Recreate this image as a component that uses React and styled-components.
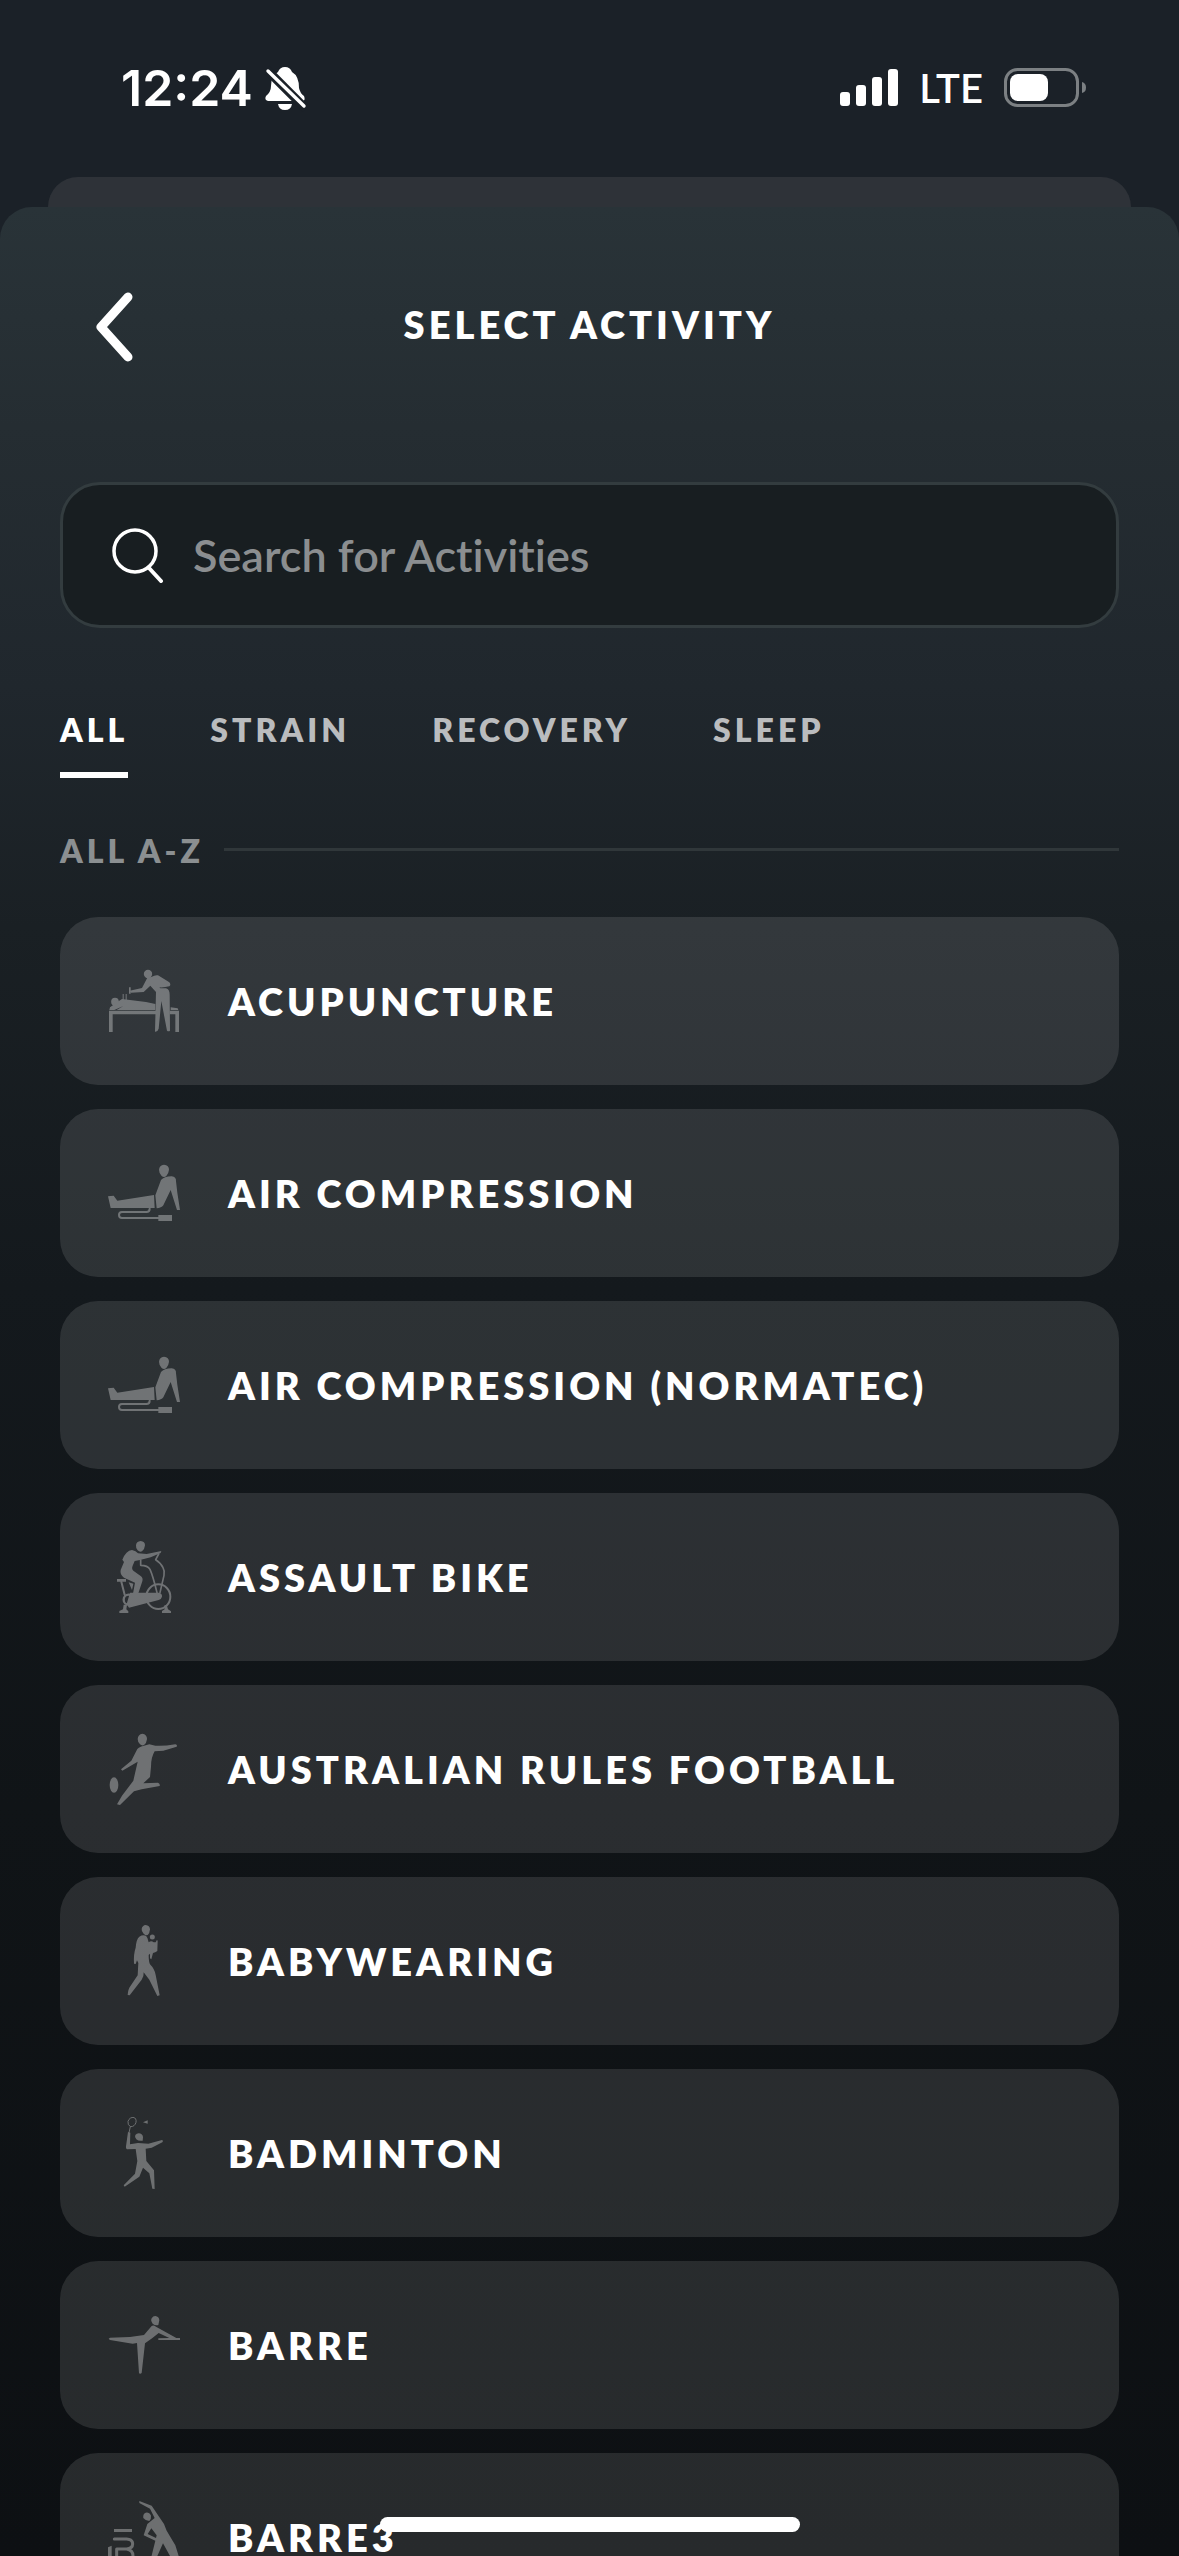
import React, { useState } from "react";
import styled, { createGlobalStyle } from "styled-components";

const GlobalStyle = createGlobalStyle`
  * { box-sizing: border-box; }
  body { margin: 0; background: #1b2128; }
  button, input { font: inherit; color: inherit; }
`;

const uiFont = `Lato, "Open Sans", sans-serif`;
const systemFont = `Inter, Roboto, sans-serif`;

const Screen = styled.div`
  position: relative;
  display: flex;
  flex-direction: column;
  height: 100vh;
  overflow: hidden;
  background: #1b2128;
  color: #fff;
  font-family: ${uiFont};
`;

const StatusBar = styled.header`
  display: flex;
  align-items: center;
  justify-content: space-between;
  flex: none;
  height: 177px;
  padding: 0 93px 2px 121px;
`;

const StatusGroup = styled.div`
  display: flex;
  align-items: center;
  gap: ${(p) => p.$gap}px;
`;

const Clock = styled.time`
  font-family: ${systemFont};
  font-size: 50px;
  font-weight: 600;
  line-height: 60px;
`;

const Network = styled.span`
  font-size: 40px;
  font-weight: 600;
  line-height: 44px;
`;

const BackSheet = styled.div`
  flex: none;
  height: 30px;
  margin: 0 48px;
  border-radius: 30px 30px 0 0;
  background: #2e3238;
`;

const Sheet = styled.main`
  display: flex;
  flex-direction: column;
  flex: 1;
  min-height: 0;
  border-radius: 32px 32px 0 0;
  background: linear-gradient(
    #293338 0,
    #252d32 220px,
    #20272d 480px,
    #1a2024 720px,
    #14191d 1080px,
    #101417 1600px,
    #0d1013 100%
  );
`;

const TitleBar = styled.div`
  display: grid;
  grid-template-columns: 120px 1fr 120px;
  align-items: center;
  flex: none;
  height: 238px;
  padding: 0 60px;
`;

const BackButton = styled.button`
  display: flex;
  width: 108px;
  padding: 20px 32px;
  border: 0;
  background: none;
`;

const Title = styled.h1`
  margin: 0;
  padding-bottom: 4px;
  font-size: 38px;
  font-weight: 800;
  line-height: 36px;
  letter-spacing: 4px;
  text-align: center;
`;

const SearchBox = styled.label`
  display: flex;
  align-items: center;
  gap: 28px;
  flex: none;
  height: 146px;
  margin: 37px 60px 0;
  padding: 0 48px;
  border: 3px solid #333c3f;
  border-radius: 40px;
  background: #181e21;
`;

const SearchInput = styled.input`
  flex: 1;
  min-width: 0;
  padding: 0;
  border: 0;
  outline: 0;
  background: none;
  font-size: 45px;
  font-weight: 600;
  font-variant-ligatures: none;
  line-height: 52px;
  &::placeholder { color: #8b8e90; opacity: 1; }
`;

const Tabs = styled.div`
  display: flex;
  gap: 82px;
  flex: none;
  margin: 84px 60px 0;
`;

const Tab = styled.button`
  padding: 0 0 24px;
  border: 0;
  border-bottom: 6px solid ${(p) => (p.$active ? "#fff" : "transparent")};
  background: none;
  color: ${(p) => (p.$active ? "#fff" : "#babcbe")};
  font-size: 32px;
  font-weight: 800;
  line-height: 36px;
  letter-spacing: 4px;
`;

const SectionTitle = styled.h2`
  display: flex;
  align-items: center;
  gap: 20px;
  flex: none;
  margin: 55px 60px 0;
  color: #8b8f91;
  font-size: 32px;
  font-weight: 800;
  line-height: 36px;
  letter-spacing: 4px;
  &::after {
    content: "";
    flex: 1;
    height: 3px;
    margin-bottom: 4px;
    background: #30373a;
  }
`;

const List = styled.ul`
  display: flex;
  flex-direction: column;
  gap: 24px;
  flex: 1;
  min-height: 0;
  margin: 48px 0 0;
  padding: 0 60px 60px;
  overflow-y: auto;
  scrollbar-width: none;
  list-style: none;
`;

const Row = styled.li`
  flex: none;
`;

const ActivityButton = styled.button`
  display: flex;
  align-items: center;
  gap: 48px;
  width: 100%;
  height: 168px;
  padding: 0 48px;
  border: 0;
  border-radius: 38px;
  background: rgba(255, 255, 255, 0.11);
  font-size: 38px;
  font-weight: 800;
  line-height: 36px;
  letter-spacing: 4px;
  text-align: left;
`;

const Pictogram = styled.svg`
  flex: none;
  width: 72px;
  height: 72px;
  opacity: 0.32;
  fill: #fff;
  stroke: none;
`;

const Line = styled.path`
  fill: none;
  stroke: #fff;
  stroke-width: ${(p) => p.$w}px;
  stroke-linecap: round;
  stroke-linejoin: round;
`;

const HomeIndicator = styled.div`
  position: absolute;
  bottom: 24px;
  left: 50%;
  width: 420px;
  height: 15px;
  margin-left: -210px;
  border-radius: 8px;
  background: #fff;
`;

const Acupuncture = () => (
  <Pictogram viewBox="144 135 216 216" aria-hidden="true">
    <circle cx="264" cy="162" r="12.5" />
    <path d="M262 173 L274 171 Q286 164 294 166 L328 187 Q334 194 328 199 Q312 203 298 202 L301 205 H318 Q329 208 329 224 L330 332 Q326 336 321 332 L304 243 L296 326 Q293 336 285 335 L288 216 L271 197 L251 216 L213 218 L209 212 L246 204 Z" />
    <path d="M207 202 h5 v19 h-5z M188 222 h3 v18 h-3z M197 222 h3 v18 h-3z" />
    <circle cx="165" cy="245" r="11.5" />
    <path d="M148 270 L150 262 L164 252 L172 246 L186 237 L258 246 L286 252 V270 H170 L190 258 L163 270 Z" />
    <path d="M147 272 H288 V283 H158 V336 H147 Z M329 272 H357 V336 H346 V283 H329 Z M332 262 L353 265 L355 270 H332 Z" />
  </Pictogram>
);

const AirCompression = () => (
  <Pictogram viewBox="84 111 216 216" aria-hidden="true">
    <path d="M252 134 Q267 136 267 149 Q266 160 259 168 Q252 174 245 168 Q237 159 237 149 Q238 136 252 134 Z" />
    <path d="M243 180 Q252 170 275 169 Q289 170 288 184 L292 218 L300 270 H291 L272 210 L250 256 Q244 264 230 265 L226 226 Z" />
    <path d="M84 229 L101 227 L112 242 L222 225 L224 264 L92 264 Z" />
    <path d="M235 285 h41 v18 h-41z" />
    <Line $w={6} d="M209 266 Q209 276 199 276 L126 276 Q117 276 117 285 Q117 294 126 294 L236 294" />
  </Pictogram>
);

const AssaultBike = () => (
  <Pictogram viewBox="84 123 216 216" aria-hidden="true">
    <path d="M182 123 Q195 124 195 136 Q194 148 186 154 Q179 157 173 151 Q167 144 168 136 Q169 124 182 123 Z" />
    <path d="M127 179 Q138 152 156 150 Q168 152 174 160 L200 162 L244 153 L242 159 L212 172 L180 180 L164 183 L158 197 Q154 206 160 212 L182 228 Q190 234 187 244 L174 283 L157 292 L165 248 L132 233 Q119 224 122 210 L132 186 Z" />
    <path d="M111 237 h27 v8 h-27z M146 247 L160 251 L156 270 Z" />
    <path d="M150 278 H236 Q247 280 246 290 Q244 298 236 300 L147 323 L140 312 Z" />
    <path d="M118 339 V333 L129 328 L131 314 H141 L139 328 L145 334 V339 Z M246 339 V333 L254 328 L252 317 L260 314 L264 328 L273 334 V339 Z" />
    <Line $w={6} d="M124 245 L134 284" />
    <Line $w={7} d="M161 299 A15 15 0 1 1 131 299 A15 15 0 1 1 161 299" />
    <Line $w={6} d="M271 290 A36 37 0 1 1 199 290 A36 37 0 1 1 271 290" />
    <Line $w={5} d="M182 180 V196 Q203 196 210 208 Q219 228 231 278 M236 162 L227 179 Q242 188 249 203 Q255 214 252 226 L240 278" />
  </Pictogram>
);

const Football = () => (
  <Pictogram viewBox="84 129 216 216" aria-hidden="true">
    <path d="M187 131 Q201 133 201 147 Q200 159 192 165 Q186 168 180 163 Q173 156 173 147 Q174 133 187 131 Z" />
    <ellipse cx="102" cy="285" rx="13" ry="23" />
    <path d="M172 177 Q178 170 208 163 L226 167 Q250 169 286 163 Q293 164 290 170 L250 182 L224 184 Q213 202 213 230 L210 261 L190 280 L234 278 Q241 281 239 288 L185 298 L162 304 L120 345 L111 343 L126 317 L160 272 L173 215 L127 242 L123 238 L154 212 Z" />
  </Pictogram>
);

const Babywearing = () => (
  <Pictogram viewBox="84 120 216 216" aria-hidden="true">
    <path d="M197 120 Q209 121 210 133 Q209 145 203 150 Q197 152 191 146 Q184 139 185 132 Q187 121 197 120 Z" />
    <circle cx="217" cy="156" r="7.5" />
    <path d="M178 155 Q188 148 198 152 Q204 158 206 172 Q214 166 221 172 L227 172 L231 164 L233 168 L232 198 Q226 203 219 204 L214 223 L210 220 L210 206 L206 210 Q206 230 210 238 Q224 252 227 270 L239 331 L232 333 L208 284 L191 262 Q192 276 185 284 L149 331 L143 330 Q144 312 152 302 L173 271 L175 234 L171 226 L167 237 L162 236 Q160 208 167 188 Q169 162 178 155 Z" />
  </Pictogram>
);

const Badminton = () => (
  <Pictogram viewBox="84 111 216 216" aria-hidden="true">
    <Line $w={3} d="M161 112 Q170 115 168 127 Q164 140 152 140 Q142 136 144 124 Q149 111 161 112 M151 140 L147 158" />
    <path d="M189 127 L203 121 V131 Z" />
    <path d="M176 160 Q187 160 189 171 L188 182 Q176 184 169 178 Q163 171 166 165 Q170 160 176 160 Z" />
    <path d="M144 156 L151 158 L150 193 L174 189 L205 191 L246 180 Q251 182 247 187 L215 203 L197 206 L199 243 L222 271 L224 327 L217 326 L208 280 L189 263 L178 290 L134 320 L131 316 L165 281 L172 243 L167 207 L141 208 Q137 206 138 199 Z" />
  </Pictogram>
);

const Barre = () => (
  <Pictogram viewBox="84 117 216 216" aria-hidden="true">
    <path d="M226 138 Q237 139 238 151 L235 165 Q226 168 218 161 Q211 152 215 145 Q219 138 226 138 Z" />
    <path d="M192 195 L215 168 Q220 164 228 170 L289 204 H300 V210 H235 V205 L268 204 L236 189 Q216 206 195 220 L185 309 Q181 313 177 310 L171 219 L158 221 L90 210 L86 206 L90 203 L150 201 Z" />
  </Pictogram>
);

const Barre3 = () => (
  <Pictogram viewBox="144 243 216 216" aria-hidden="true">
    <path d="M162 327 h54 v9 h-54z M144 382 L155 377 V459 H144 Z" />
    <Line $w={9} d="M163 357 H200 Q218 358 218 372 Q218 385 200 387 H170 M200 387 Q219 390 219 408 Q219 428 200 430 H170 V387" />
    <path d="M257 278 Q268 276 273 287 Q274 298 268 303 Q257 303 250 294 Q248 282 257 278 Z" />
    <path fillRule="evenodd" d="M238 243 L275 257 L312 312 L320 332 L346 376 L356 408 V459 H344 L330 408 L309 370 L292 408 L274 459 H262 L286 362 L251 346 L262 312 L284 294 L270 266 L238 249 Z M274 325 L263 342 L288 354 L290 346 Z" />
  </Pictogram>
);

const activities = [
  ["Acupuncture", Acupuncture],
  ["Air Compression", AirCompression],
  ["Air Compression (Normatec)", AirCompression],
  ["Assault Bike", AssaultBike],
  ["Australian Rules Football", Football],
  ["Babywearing", Babywearing],
  ["Badminton", Badminton],
  ["Barre", Barre],
  ["Barre3", Barre3],
];

const tabs = ["ALL", "STRAIN", "RECOVERY", "SLEEP"];

const MutedBell = () => (
  <svg width="44" height="48" viewBox="264 64 44 48" fill="#fff" aria-label="Silent mode">
    <path d="M285 67 Q290 67 292 72 Q299 76 299 88 Q300 93 304 96 Q306 101 302 101 H268 Q264 100 266 96 Q271 92 271 86 Q271 76 278 72 Q280 67 285 67 Z" />
    <path d="M278 104 H292 Q291 110 285 110 Q279 110 278 104 Z" />
    <path d="M266 69 L306 109" stroke="#1b2128" strokeWidth="9" />
    <path d="M268 71 L304 106" stroke="#fff" strokeWidth="3.4" strokeLinecap="round" />
  </svg>
);

const Signal = () => (
  <svg width="58" height="38" viewBox="0 0 58 38" fill="#fff" aria-label="Signal strength">
    <rect x="0" y="23" width="10" height="14" rx="3" />
    <rect x="16" y="16" width="10" height="21" rx="3" />
    <rect x="32" y="8" width="10" height="29" rx="3" />
    <rect x="48" y="0" width="10" height="37" rx="3" />
  </svg>
);

const Battery = () => (
  <svg width="82" height="40" viewBox="0 0 82 40" fill="none" aria-label="Battery">
    <rect x="1.5" y="1.5" width="72" height="36" rx="12" stroke="#7c8083" strokeWidth="3" />
    <rect x="6" y="6" width="38" height="27" rx="8" fill="#fff" />
    <path d="M78 14 Q82 15 82 19.500 Q82 24 78 25 Z" fill="#7c8083" />
  </svg>
);

export default function App() {
  const [active, setActive] = useState("ALL");
  return (
    <>
      <GlobalStyle />
      <Screen>
        <StatusBar>
          <StatusGroup $gap={11}>
            <Clock>12:24</Clock>
            <MutedBell />
          </StatusGroup>
          <StatusGroup $gap={21}>
            <Signal />
            <Network>LTE</Network>
            <Battery />
          </StatusGroup>
        </StatusBar>
        <BackSheet />
        <Sheet>
          <TitleBar>
            <BackButton aria-label="Back">
              <svg width="44" height="72" viewBox="0 0 44 72" fill="none" aria-hidden="true">
                <path d="M36 7 L9 37 L36 67" stroke="#fff" strokeWidth="9" strokeLinecap="round" strokeLinejoin="round" />
              </svg>
            </BackButton>
            <Title>SELECT ACTIVITY</Title>
          </TitleBar>
          <SearchBox>
            <svg width="54" height="56" viewBox="0 0 54 56" fill="none" stroke="#fff" aria-hidden="true">
              <circle cx="24" cy="24" r="21" strokeWidth="3.500" />
              <path d="M38 41 L50 54" strokeWidth="4" strokeLinecap="round" />
            </svg>
            <SearchInput type="text" aria-label="Search for Activities" placeholder="Search for Activities" />
          </SearchBox>
          <Tabs role="tablist">
            {tabs.map((name) => (
              <Tab
                key={name}
                role="tab"
                aria-selected={active === name}
                $active={active === name}
                onClick={() => setActive(name)}
              >
                {name}
              </Tab>
            ))}
          </Tabs>
          <SectionTitle>ALL A-Z</SectionTitle>
          <List>
            {activities.map(([name, Icon]) => (
              <Row key={name}>
                <ActivityButton>
                  <Icon />
                  {name.toUpperCase()}
                </ActivityButton>
              </Row>
            ))}
          </List>
        </Sheet>
        <HomeIndicator />
      </Screen>
    </>
  );
}
